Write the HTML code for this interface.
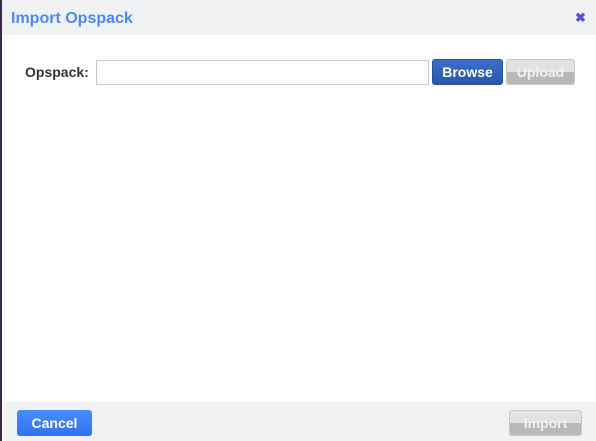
<!DOCTYPE html>
<html><head><style>
body{margin:0;width:596px;height:441px;overflow:hidden;background:#fff;font-family:"Liberation Sans",sans-serif;position:relative}
.edge{position:absolute;left:0;top:0;width:2px;height:441px;background:#3a2a4a}
.hdr{position:absolute;left:2px;top:0;width:594px;height:35px;background:#f0f1f3}
.title{position:absolute;left:11px;top:10px;font-size:16px;font-weight:bold;color:#4a8af4}
.x{position:absolute;left:575px;top:10px;font-size:13px;font-weight:bold;color:#5b4fd6}
.lbl{position:absolute;left:25px;top:64px;font-size:14px;font-weight:bold;color:#333}
.inp{position:absolute;left:96px;top:60px;width:331px;height:23px;border:1px solid #c8c8c8;background:#fff}
.btn{position:absolute;font-size:14px;font-weight:bold;text-align:center;border-radius:3px;box-sizing:border-box}
.browse{left:432px;top:59px;width:71px;height:26px;line-height:24px;background:linear-gradient(#3a6fc8,#2a57a8);color:#fff;border:1px solid #2a5098}
.dis{background:linear-gradient(#e2e2e2 50%,#b9b9b9 50%);color:#f2f2f2;border:1px solid #c8c8c8}
.upload{left:506px;top:59px;width:69px;height:26px;line-height:24px}
.ftr{position:absolute;left:4px;top:402px;width:592px;height:39px;background:#f0f1f3}
.cancel{left:17px;top:410px;width:75px;height:26px;line-height:26px;background:linear-gradient(#4a8cff,#2f74f0);color:#fff}
.import{left:509px;top:410px;width:73px;height:26px;line-height:24px}
</style></head><body>
<div class="edge"></div>
<div class="hdr"></div>
<div class="title">Import Opspack</div>
<div class="x">✖</div>
<div class="lbl">Opspack:</div>
<div class="inp"></div>
<div class="btn browse">Browse</div>
<div class="btn dis upload">Upload</div>
<div class="ftr"></div>
<div class="btn cancel">Cancel</div>
<div class="btn dis import">Import</div>
</body></html>
